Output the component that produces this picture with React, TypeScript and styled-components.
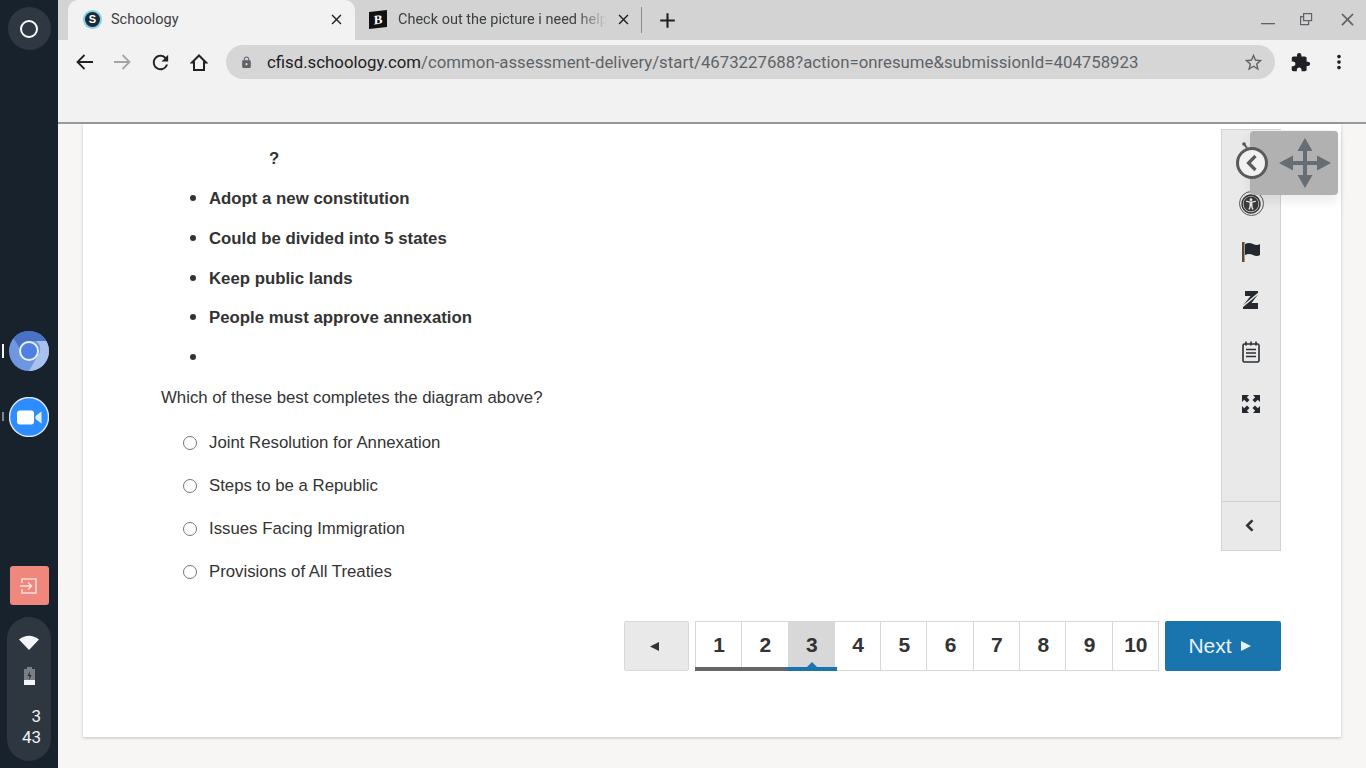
import styled, { createGlobalStyle } from "styled-components";
import {
  MdAdd,
  MdClose,
  MdExtension,
  MdLock,
  MdMoreVert,
  MdRefresh,
  MdStarBorder,
} from "react-icons/md";
import { FaChevronLeft, FaUniversalAccess } from "react-icons/fa";

const GlobalStyle = createGlobalStyle`
  html, body {
    margin: 0;
    padding: 0;
    height: 768px;
    overflow: hidden;
    font-family: "Liberation Sans", Arial, sans-serif;
  }
`;

const bullets = [
  "Adopt a new constitution",
  "Could be divided into 5 states",
  "Keep public lands",
  "People must approve annexation",
  "",
];

const answers = [
  "Joint Resolution for Annexation",
  "Steps to be a Republic",
  "Issues Facing Immigration",
  "Provisions of All Treaties",
];

const pages = ["1", "2", "3", "4", "5", "6", "7", "8", "9", "10"];

function App() {
  return (
    <Screen>
      <GlobalStyle />
      <Shelf>
        <Launcher>
          <LauncherRing />
        </Launcher>
        <ShelfApp $active $top={281}>
          <svg width="40" height="40" viewBox="0 0 40 40">
            <circle cx="20" cy="20" r="20" fill="#6f97e0" />
            <path d="M20 0a20 20 0 0 1 17.300 10H20a10 10 0 0 0-9.500 7L4.600 7A20 20 0 0 1 20 0z" fill="#4a72c4" />
            <path d="M37.300 10A20 20 0 0 1 20 40l8.600-15A10 10 0 0 0 27 10z" fill="#a9c1ee" />
            <circle cx="20" cy="20" r="9" fill="#4f80e1" stroke="#e8effb" strokeWidth="2" />
          </svg>
        </ShelfApp>
        <ShelfApp $top={26}>
          <svg width="40" height="40" viewBox="0 0 40 40">
            <circle cx="20" cy="20" r="19.500" fill="#2d8cff" stroke="#dfe8f5" strokeWidth="1.400" />
            <rect x="8" y="13.500" width="17" height="14" rx="3" fill="#fff" />
            <path d="M26.500 19l6-4.500v12l-6-4.500z" fill="#e4eefb" />
          </svg>
        </ShelfApp>
        <ExitButton>
          <svg width="18" height="18" viewBox="0 0 18 18" fill="none" stroke="#fbdcd8" strokeWidth="1.600">
            <path d="M2 6V2h14v14H2v-4" />
            <path d="M0 9h11M8 5.500L11.500 9 8 12.500" />
          </svg>
        </ExitButton>
        <StatusPill>
          <svg width="20" height="15" viewBox="0 0 20 15">
            <path d="M0 4.500Q10-3 20 4.500L10 15z" fill="#f4f5f6" />
          </svg>
          <BatteryIcon>
            <svg width="11" height="18" viewBox="0 0 11 18">
              <path d="M3 0h5v2h3v16H0V2h3z" fill="#7b7f85" />
              <rect y="13" width="11" height="5" fill="#f4f5f6" />
              <path d="M6 4L3.500 9h2L5 13l2.500-5h-2z" fill="#24282e" />
            </svg>
          </BatteryIcon>
          <Clock>
            <span>3</span>
            <span>43</span>
          </Clock>
        </StatusPill>
      </Shelf>

      <Browser>
        <TabStrip>
          <Tab $active>
            <SchoologyIcon>S</SchoologyIcon>
            <TabTitle>Schoology</TabTitle>
            <TabClose>
              <MdClose size={17} />
            </TabClose>
          </Tab>
          <Tab>
            <BrainlyIcon>B</BrainlyIcon>
            <TabTitle $faded>Check out the picture i need help</TabTitle>
            <TabClose>
              <MdClose size={17} />
            </TabClose>
          </Tab>
          <TabDivider />
          <NewTab>
            <MdAdd size={25} />
          </NewTab>
          <WindowControls>
            <svg width="14" height="14" viewBox="0 0 14 14">
              <rect y="11" width="14" height="1.300" fill="#5f6368" />
            </svg>
            <svg width="14" height="14" viewBox="0 0 14 14" fill="none" stroke="#5f6368" strokeWidth="1.200">
              <rect x="4.600" y="1.600" width="8" height="7" />
              <path d="M4.600 4.600H1.600v8h8v-4" />
            </svg>
            <MdClose size={21} color="#5f6368" />
          </WindowControls>
        </TabStrip>

        <Toolbar>
          <NavButton>
            <svg width="17" height="16" viewBox="0 0 17 16" fill="none" stroke="currentColor" strokeWidth="1.800">
              <path d="M17 8H2M8.500 1L1.500 8l7 7" />
            </svg>
          </NavButton>
          <NavButton $disabled>
            <svg width="17" height="16" viewBox="0 0 17 16" fill="none" stroke="currentColor" strokeWidth="1.800">
              <path d="M0 8h15M8.500 1l7 7-7 7" />
            </svg>
          </NavButton>
          <NavButton>
            <MdRefresh size={23} />
          </NavButton>
          <NavButton>
            <svg width="18" height="17" viewBox="0 0 18 17" fill="none" stroke="currentColor" strokeWidth="2">
              <path d="M9 1.500L2 8.500h2V16h10V8.500h2z" />
            </svg>
          </NavButton>
          <AddressBar>
            <LockSlot>
              <MdLock size={13} />
            </LockSlot>
            <Url>
              <b>cfisd.schoology.com</b>
              /common-assessment-delivery/start/4673227688?action=onresume&amp;submissionId=404758923
            </Url>
            <MdStarBorder size={21} color="#5f6368" />
          </AddressBar>
          <ToolbarEnd>
            <MdExtension size={21} />
            <MdMoreVert size={22} />
          </ToolbarEnd>
        </Toolbar>

        <Viewport>
          <Card>
            <Body>
              <Question>
                <Mark>?</Mark>
                <BulletList>
                  {bullets.map((text, i) => (
                    <li key={i}>{text}</li>
                  ))}
                </BulletList>
                <Prompt>Which of these best completes the diagram above?</Prompt>
                <Answers>
                  {answers.map((text) => (
                    <Answer key={text}>
                      <input type="radio" name="answer" />
                      <span>{text}</span>
                    </Answer>
                  ))}
                </Answers>
              </Question>

              <ToolPanel>
                <ToolList>
                  <AccessBadge>
                    <FaUniversalAccess size={20} color="#3a3a3a" />
                  </AccessBadge>
                  <ToolIcon $height={44}>
                    <svg width="20" height="22" viewBox="0 0 20 22">
                      <rect x="1" y="1" width="2.500" height="20" fill="#5a4636" />
                      <path d="M4 3q4-2 8 0t7 0v11q-3 2-7 0t-8 0z" fill="#23282e" />
                    </svg>
                  </ToolIcon>
                  <ToolIcon>
                    <svg width="18" height="20" viewBox="0 0 18 20">
                      <path d="M3 1h13v3.500L9.500 13H16v6H1v-3.500L8.500 6H3z" fill="#262a2f" />
                      <path d="M0 17L18 2" stroke="#e9e9e9" strokeWidth="1.500" />
                    </svg>
                  </ToolIcon>
                  <ToolIcon>
                    <svg width="20" height="22" viewBox="0 0 20 22" fill="none" stroke="#2b2f34" strokeWidth="1.600">
                      <rect x="2" y="3" width="16" height="18" rx="1.500" />
                      <path d="M5 0.500v4M10 0.500v4M15 0.500v4M5 8.500h10M5 12h10M5 15.500h10" />
                    </svg>
                  </ToolIcon>
                  <ToolIcon>
                    <svg width="20" height="20" viewBox="0 0 20 20" fill="#23282e">
                      <path d="M1 1h7L5.800 3.200 8.500 6 6 8.500 3.200 5.800 1 8z" />
                      <path d="M19 1v7l-2.200-2.200L14 8.500 11.500 6l2.700-2.800L12 1z" />
                      <path d="M1 19v-7l2.200 2.200L6 11.500 8.500 14l-2.700 2.800L8 19z" />
                      <path d="M19 19h-7l2.200-2.200L11.500 14 14 11.500l2.800 2.700L19 12z" />
                    </svg>
                  </ToolIcon>
                </ToolList>
                <CollapseButton>
                  <FaChevronLeft size={13} color="#2b2f34" stroke="#2b2f34" strokeWidth={30} />
                </CollapseButton>
                <MoveHandle>
                  <TimerBadge>
                    <svg width="34" height="40" viewBox="0 0 34 40">
                      <circle cx="9" cy="4" r="1.800" fill="#555" />
                      <path d="M9 4l3 4" stroke="#555" strokeWidth="2" />
                      <circle cx="17" cy="23" r="14.500" fill="#f1f1f1" stroke="#5a5a5a" strokeWidth="3" />
                      <path d="M20.500 16l-7 7 7 7" fill="none" stroke="#5a5a5a" strokeWidth="3.200" />
                    </svg>
                  </TimerBadge>
                  <svg width="52" height="50" viewBox="0 0 52 50" fill="#666d73">
                    <path d="M26 0l7.500 13H28v10h10v-5.500L52 25l-14 7.500V27H28v10h5.500L26 50l-7.500-13H24V27H14v5.500L0 25l14-7.500V23h10V13h-5.500z" />
                  </svg>
                </MoveHandle>
              </ToolPanel>
            </Body>

            <Pager>
              <PrevButton>
                <svg width="9" height="9" viewBox="0 0 9 9">
                  <path d="M9 0v9L0 4.500z" fill="#333" />
                </svg>
              </PrevButton>
              <PageList>
                {pages.map((page) => (
                  <PageCell key={page} $current={page === "3"}>
                    {page}
                  </PageCell>
                ))}
                <Progress>
                  <ProgressDone />
                  <ProgressCurrent />
                </Progress>
              </PageList>
              <NextButton>
                Next
                <svg width="10" height="10" viewBox="0 0 10 10">
                  <path d="M0 0v10l10-5z" fill="#e8f2f8" />
                </svg>
              </NextButton>
            </Pager>
          </Card>
        </Viewport>
      </Browser>
    </Screen>
  );
}

const Screen = styled.div`
  display: flex;
  width: 1366px;
  height: 768px;
  overflow: hidden;
`;

const Shelf = styled.aside`
  width: 58px;
  flex-shrink: 0;
  background: #18222d;
  display: flex;
  flex-direction: column;
  align-items: center;
  padding-top: 7px;
  box-sizing: border-box;
`;

const Launcher = styled.div`
  width: 43px;
  height: 43px;
  border-radius: 50%;
  background: #2e3742;
  display: flex;
  align-items: center;
  justify-content: center;
`;

const LauncherRing = styled.div`
  width: 14px;
  height: 14px;
  border: 2px solid #fff;
  border-radius: 50%;
`;

const ShelfApp = styled.div<{ $active?: boolean; $top: number }>`
  width: 40px;
  height: 40px;
  margin-top: ${(props) => props.$top}px;
  position: relative;
  svg {
    display: block;
  }
  &::before {
    content: "";
    position: absolute;
    left: -7px;
    top: ${(props) => (props.$active ? "13px" : "15px")};
    width: 2px;
    height: ${(props) => (props.$active ? "14px" : "9px")};
    background: ${(props) => (props.$active ? "#f1f3f4" : "#7f868e")};
  }
`;

const ExitButton = styled.div`
  width: 39px;
  height: 39px;
  margin-top: 129px;
  border-radius: 3px;
  background: #f0877d;
  display: flex;
  align-items: center;
  justify-content: center;
`;

const StatusPill = styled.div`
  width: 44px;
  height: 144px;
  margin-top: 12px;
  border-radius: 22px;
  background: #2e3640;
  display: flex;
  flex-direction: column;
  align-items: center;
  padding-top: 18px;
  box-sizing: border-box;
  svg {
    display: block;
  }
`;

const BatteryIcon = styled.div`
  margin-top: 17px;
`;

const Clock = styled.div`
  margin-top: 21px;
  width: 24px;
  display: flex;
  flex-direction: column;
  align-items: flex-end;
  font-family: Roboto, sans-serif;
  font-size: 17px;
  line-height: 21px;
  color: #f1f3f4;
`;

const Browser = styled.main`
  flex: 1;
  display: flex;
  flex-direction: column;
  min-width: 0;
`;

const TabStrip = styled.div`
  height: 40px;
  background: #d3d3d3;
  display: flex;
  align-items: center;
  padding-left: 10px;
  flex-shrink: 0;
`;

const Tab = styled.div<{ $active?: boolean }>`
  width: 287px;
  height: 40px;
  display: flex;
  align-items: center;
  box-sizing: border-box;
  padding: 0 9px 2px ${(props) => (props.$active ? "17px" : "14px")};
  border-radius: 10px 10px 0 0;
  background: ${(props) => (props.$active ? "#f2f2f2" : "transparent")};
  font-family: Roboto, sans-serif;
  font-size: 14.5px;
  color: #3c4043;
`;

const SchoologyIcon = styled.div`
  width: 15px;
  height: 15px;
  border-radius: 50%;
  background: #1d2a35;
  box-shadow: 0 0 0 2px #7fd0e8;
  color: #fff;
  font: bold 11px/15px "Liberation Sans", sans-serif;
  text-align: center;
  flex-shrink: 0;
  margin-right: 11px;
`;

const BrainlyIcon = styled.div`
  width: 18px;
  height: 17px;
  background: #111;
  color: #fff;
  font: bold 13px/17px "Liberation Serif", serif;
  text-align: center;
  flex-shrink: 0;
  margin-right: 11px;
  transform: skewY(-6deg);
`;

const TabTitle = styled.div<{ $faded?: boolean }>`
  flex: 1;
  white-space: nowrap;
  overflow: hidden;
  ${(props) =>
    props.$faded &&
    `
    -webkit-mask-image: linear-gradient(to right, #000 85%, transparent 100%);
    mask-image: linear-gradient(to right, #000 85%, transparent 100%);
  `}
`;

const TabClose = styled.div`
  width: 20px;
  display: flex;
  justify-content: center;
  color: #202124;
  margin-left: 6px;
`;

const TabDivider = styled.div`
  width: 1px;
  height: 26px;
  background: #8b8b8b;
  margin-left: -1px;
`;

const NewTab = styled.div`
  display: flex;
  margin-left: 13px;
  color: #202124;
`;

const WindowControls = styled.div`
  margin-left: auto;
  display: flex;
  align-items: center;
  gap: 24px;
  padding: 0 8px 2px 0;
  svg {
    display: block;
  }
`;

const Toolbar = styled.div`
  height: 84px;
  background: #f2f2f2;
  border-bottom: 2px solid #9a9a9a;
  box-sizing: border-box;
  flex-shrink: 0;
  display: flex;
  align-items: flex-start;
  padding: 5px 0 0 7px;
`;

const NavButton = styled.div<{ $disabled?: boolean }>`
  width: 38.3px;
  height: 34px;
  display: flex;
  align-items: center;
  justify-content: center;
  color: ${(props) => (props.$disabled ? "#a3a5a8" : "#202124")};
`;

const AddressBar = styled.div`
  width: 1049px;
  height: 34px;
  margin-left: 7.8px;
  border-radius: 17px;
  background: #d6d6d6;
  display: flex;
  align-items: center;
  padding-right: 11px;
  box-sizing: border-box;
`;

const LockSlot = styled.div`
  width: 41px;
  display: flex;
  justify-content: center;
  color: #5f6368;
`;

const Url = styled.div`
  flex: 1;
  font-family: Roboto, sans-serif;
  font-size: 16.8px;
  color: #5f6368;
  white-space: nowrap;
  b {
    font-weight: 400;
    color: #202124;
  }
`;

const ToolbarEnd = styled.div`
  display: flex;
  align-items: center;
  height: 34px;
  gap: 17px;
  margin-left: 15px;
  color: #202124;
`;

const Viewport = styled.div`
  flex: 1;
  background: #f7f6f4;
  padding: 0 25px;
  min-height: 0;
`;

const Card = styled.section`
  height: 613px;
  background: #fff;
  box-shadow: 0 1px 3px rgba(0, 0, 0, 0.22);
  box-sizing: border-box;
  padding: 5px 60px 0 78px;
  color: #333;
  font-size: 16.8px;
`;

const Body = styled.div`
  display: flex;
  justify-content: space-between;
  align-items: flex-start;
  height: 422px;
`;

const Question = styled.div`
  padding-top: 20px;
`;

const Mark = styled.div`
  font-weight: bold;
  line-height: 20px;
  padding-left: 108px;
`;

const BulletList = styled.ul`
  list-style: disc;
  margin: 18px 0 2px;
  padding: 0 0 0 48px;
  font-weight: bold;
  li {
    height: 39.8px;
    line-height: 20px;
  }
  li::marker {
    font-size: 1.2em;
  }
`;

const Prompt = styled.p`
  margin: 0;
  line-height: 20px;
`;

const Answers = styled.div`
  margin-top: 25px;
  display: flex;
  flex-direction: column;
  gap: 23px;
`;

const Answer = styled.label`
  display: flex;
  align-items: center;
  height: 20px;
  input {
    width: 14px;
    height: 14px;
    margin: 0 12px 0 22px;
  }
`;

const ToolPanel = styled.div`
  width: 60px;
  height: 422px;
  box-sizing: border-box;
  background: #e9e9e9;
  border: 1px solid #d2d2d2;
  display: flex;
  flex-direction: column;
  position: relative;
`;

const ToolList = styled.div`
  flex: 1;
  display: flex;
  flex-direction: column;
  align-items: center;
  padding-top: 61px;
`;

const ToolIcon = styled.div<{ $height?: number }>`
  height: ${(props) => props.$height ?? 52}px;
  display: flex;
  align-items: center;
  justify-content: center;
  svg {
    display: block;
  }
`;

const AccessBadge = styled.div`
  width: 25px;
  height: 25px;
  margin-bottom: 14px;
  border-radius: 50%;
  border: 1px solid #555;
  box-sizing: border-box;
  display: flex;
  align-items: center;
  justify-content: center;
`;

const CollapseButton = styled.div`
  height: 49px;
  border-top: 1px solid #d2d2d2;
  box-sizing: border-box;
  display: flex;
  align-items: center;
  justify-content: center;
  padding: 0 3px 1px 0;
`;

const MoveHandle = styled.div`
  position: absolute;
  top: 0;
  left: 28px;
  width: 88px;
  height: 65px;
  border-radius: 4px;
  border-top: 1px solid #f2f2f2;
  box-sizing: border-box;
  background: #b1b1b1;
  box-shadow: 0 6px 12px rgba(0, 0, 0, 0.08);
  display: flex;
  align-items: center;
  justify-content: flex-end;
  padding-right: 7px;
  svg {
    display: block;
  }
`;

const TimerBadge = styled.div`
  position: absolute;
  left: -15px;
  top: 9px;
`;

const Pager = styled.nav`
  margin-top: 70px;
  display: flex;
  justify-content: flex-end;
  gap: 6px;
  height: 50px;
`;

const PrevButton = styled.div`
  width: 65px;
  background: #e9e9e9;
  border: 1px solid #d8d8d8;
  border-radius: 2px;
  box-sizing: border-box;
  display: flex;
  align-items: center;
  justify-content: center;
  padding-right: 4px;
`;

const PageList = styled.div`
  width: 464px;
  display: flex;
  position: relative;
  border: 1px solid #d8d8d8;
  box-sizing: border-box;
`;

const PageCell = styled.div<{ $current?: boolean }>`
  flex: 1;
  display: flex;
  align-items: center;
  justify-content: center;
  padding: 0 0 2px 1px;
  font-size: 21px;
  font-weight: bold;
  color: #333;
  background: ${(props) => (props.$current ? "#d8d8d8" : "#fff")};
  border-left: 1px solid #d8d8d8;
  &:first-of-type {
    border-left: 0;
  }
`;

const Progress = styled.div`
  position: absolute;
  left: -1px;
  bottom: -1px;
  display: flex;
  height: 4px;
`;

const ProgressDone = styled.div`
  width: 92px;
  background: #666;
`;

const ProgressCurrent = styled.div`
  width: 50px;
  background: #1a75ae;
  position: relative;
  &::before {
    content: "";
    position: absolute;
    left: 20px;
    top: -5px;
    border: 5px solid transparent;
    border-top: 0;
    border-bottom: 5px solid #1a75ae;
  }
`;

const NextButton = styled.div`
  width: 116px;
  background: #1a75ae;
  border-radius: 2px;
  color: #e8f2f8;
  font-size: 21px;
  display: flex;
  align-items: center;
  justify-content: center;
  gap: 9px;
  padding-right: 7px;
  box-sizing: border-box;
`;

export default App;
